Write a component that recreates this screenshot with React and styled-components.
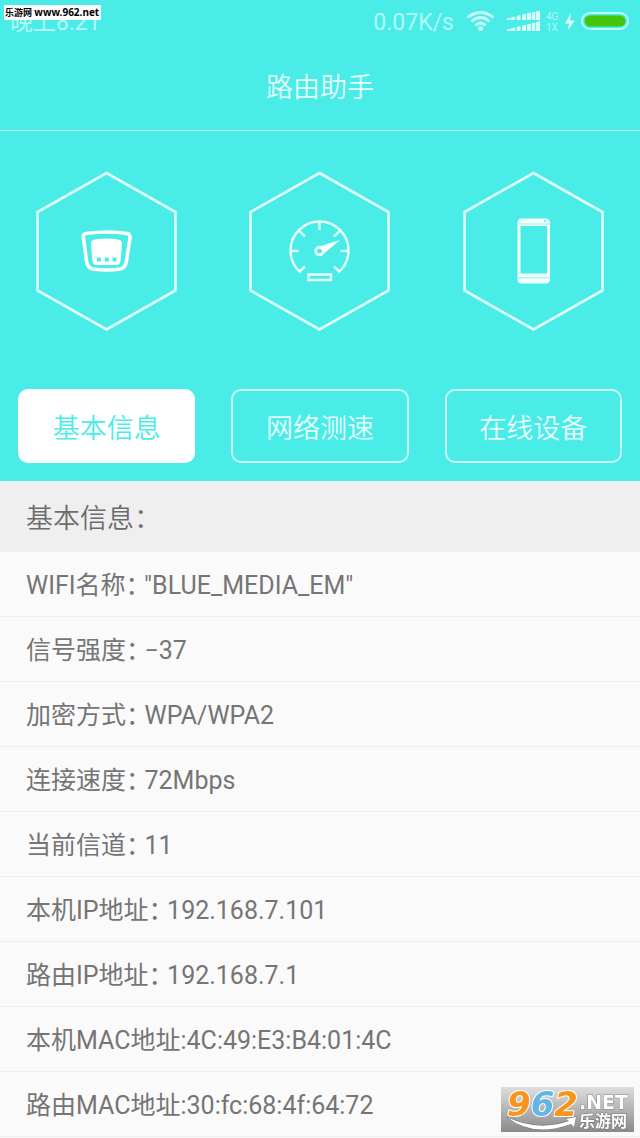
import React, { useState } from "react";
import styled, { createGlobalStyle } from "styled-components";

const GlobalStyle = createGlobalStyle`
  * {
    box-sizing: border-box;
  }
  body {
    margin: 0;
    background: #fafafa;
    font-family: Roboto, "Noto Sans CJK SC", sans-serif;
  }
`;

const tabs = [
  { id: "info", label: "基本信息", Icon: RouterIcon },
  { id: "speed", label: "网络测速", Icon: GaugeIcon },
  { id: "devices", label: "在线设备", Icon: PhoneIcon },
];

const rows = [
  { label: "WIFI名称\uff1a", value: '"BLUE_MEDIA_EM"' },
  { label: "信号强度\uff1a", value: "−37" },
  { label: "加密方式\uff1a", value: "WPA/WPA2" },
  { label: "连接速度\uff1a", value: "72Mbps" },
  { label: "当前信道\uff1a", value: "11" },
  { label: "本机IP地址\uff1a", value: "192.168.7.101" },
  { label: "路由IP地址\uff1a", value: "192.168.7.1" },
  { label: "本机MAC地址:", value: "4C:49:E3:B4:01:4C", tight: true },
  { label: "路由MAC地址:", value: "30:fc:68:4f:64:72", tight: true },
];

function RouterIcon() {
  return (
    <g>
      <path
        d="M50 62.5Q70.500 59.500 91 62.500Q94.500 63 94 67L90.500 90Q89.500 97 84 98Q70.500 100 57 98Q51.500 97 50.500 90L47.500 67Q46.500 63 50 62.500Z"
        fill="none"
        stroke="#fff"
        strokeWidth="3.600"
      />
      <path
        d="M59 68.500Q70.500 66.500 82 68.500Q86.500 69 86 74L84.500 90Q84 94 80.500 94H60.500Q57 94 56.500 90L55 74Q54.500 69 59 68.500Z"
        fill="#fff"
      />
      <path d="M61 86.500h4v4h-4zM68.800 86.500h4v4h-4zM76.500 86.500h4v4h-4z" fill="#4aece8" />
    </g>
  );
}

function GaugeIcon() {
  return (
    <g fill="none" stroke="#e6fffe" strokeWidth="2.400">
      <path d="M56 95.500L50.500 100.500A29 29 0 1 1 90.500 100.500L85 95.500" />
      <path d="M70.500 51v8M50.500 60l5.500 5.500M90.500 60l-5.500 5.500M41.500 80h8M99.500 80h-8" />
      <circle cx="70.500" cy="80" r="3.700" strokeWidth="3" />
      <path d="M70.500 75.500L91 69L75 82.500Z" fill="#fff" stroke="none" />
      <circle cx="70.500" cy="80" r="2.200" fill="#4aece8" stroke="none" />
      <path d="M59.500 103.500h22.500v5.500H59.500z" />
    </g>
  );
}

function PhoneIcon() {
  return (
    <g>
      <path
        fillRule="evenodd"
        fill="#f2ffff"
        d="M58 47.500H83Q87 48 87 52V108Q87 112 83 112.500H58Q54.500 112 54.500 108V52Q54.500 48 58 47.500ZM57.500 55V102.500H84V55Z"
      />
      <path d="M55 53H87M55 106.800H87" stroke="#8cf3f1" />
      <circle cx="82" cy="50" r="1" fill="#4aece8" />
    </g>
  );
}

function StatusIcons() {
  return (
    <StatusSvg viewBox="0 0 164 36" role="img" aria-label="WiFi, 信号, 充电中">
      <g fill="none" stroke="#c8fbfa" strokeWidth="2.800">
        <path d="M1.500 12.500Q14.500 2.500 27.500 12.500" />
        <path d="M5.500 16.500Q14.500 8.500 23.500 16.500" />
        <path d="M9.500 20.500Q14.500 15.500 19.500 20.500" />
      </g>
      <circle cx="14.500" cy="23.500" r="2.500" fill="#c8fbfa" />
      <g fill="#d5fcfb">
        <path d="M41 13.500l8-2V15h-8zM50.500 11l4-1v5h-4zM56 9.800l4-1V15h-4zM61 8.600l4-1V15h-4zM65.800 7.500l3.500-.8V15h-3.500zM70 6.500l4-1V15h-4z" />
        <path d="M41 24.500l8-2V26h-8zM50.500 22l4-1v5h-4zM56 20.800l4-1V26h-4zM61 19.500l4-1V26h-4zM65.800 18.300l3.500-.8V26h-3.500zM70 17l4-1v10h-4z" />
        <path d="M105 8L99 18.500h4.200l-1.700 7L109 15.500h-4.800z" />
      </g>
      <g fill="#b0f8f6" fontFamily="Roboto, sans-serif" fontSize="10">
        <text x="80" y="15">4G</text>
        <text x="80" y="26">1X</text>
      </g>
      <rect x="116" y="8" width="46" height="16" rx="8" fill="#4aece8" stroke="#b9fbf7" strokeWidth="2" />
      <rect x="118.500" y="10.500" width="41" height="11" rx="5.500" fill="#45c408" />
    </StatusSvg>
  );
}

function App() {
  const [active, setActive] = useState("info");

  return (
    <>
      <GlobalStyle />
      <Header>
        <StatusBar>
          <span>晚上8:21</span>
          <StatusRight>
            <span>0.07K/s</span>
            <StatusIcons />
          </StatusRight>
        </StatusBar>
        <Title>路由助手</Title>
        <Tabs>
          {tabs.map(({ id, label, Icon }) => (
            <Tab key={id}>
              <Hexagon viewBox="0 0 141 160" aria-hidden="true">
                <path
                  d="M70.500 2L139.500 41V119.500L70.500 158.500L1.500 119.500V41Z"
                  fill="none"
                  stroke="#dffefd"
                  strokeWidth="2.600"
                />
                <Icon />
              </Hexagon>
              <TabButton
                type="button"
                $active={active === id}
                aria-pressed={active === id}
                onClick={() => setActive(id)}
              >
                {label}
              </TabButton>
            </Tab>
          ))}
        </Tabs>
      </Header>
      <main>
        <SectionTitle>基本信息{"\uff1a"}</SectionTitle>
        <List>
          {rows.map((row) => (
            <Row key={row.label} $tight={row.tight}>
              <dt>{row.label}</dt>
              <dd>{row.value}</dd>
            </Row>
          ))}
        </List>
      </main>
      <SiteTag>
        乐游网 <span>www.962.net</span>
      </SiteTag>
      <SiteLogo viewBox="0 0 133 45" role="img" aria-label="962.NET 乐游网">
        <defs>
          <linearGradient id="logoBg" x1="0" y1="0" x2="0" y2="1">
            <stop offset="0" stopColor="#dedede" />
            <stop offset="1" stopColor="#8a8a8a" />
          </linearGradient>
        </defs>
        <rect width="133" height="45" fill="url(#logoBg)" />
        <g fontFamily="DejaVu Sans, sans-serif" fontWeight="700" paintOrder="stroke" strokeLinejoin="round">
          <text x="6" y="29" fontSize="34" fontStyle="italic" fill="#f7941d" stroke="#fff" strokeWidth="2">
            9<tspan fill="#62b5e5">6</tspan>2
          </text>
          <text x="78" y="22" fontSize="19" fill="#fff" stroke="#888" strokeWidth="1">
            .NET
          </text>
        </g>
        <g fill="#fff" stroke="#777" strokeWidth="1" paintOrder="stroke">
          <text x="78" y="40" fontSize="16" fontWeight="700" fontFamily="Noto Sans CJK SC, sans-serif">
            乐游网
          </text>
          <path d="M6 30Q36 45 68 34L65 32L75 30L73 40L70 37Q32 51 6 30Z" />
        </g>
      </SiteLogo>
    </>
  );
}

const Header = styled.header`
  background: #4aece8;
  color: #e4fefd;
`;

const StatusBar = styled.div`
  display: flex;
  justify-content: space-between;
  align-items: center;
  height: 46px;
  padding: 0 10px;
  font-size: 23px;
  line-height: 46px;
  color: #b5f9f7;
`;

const StatusRight = styled.div`
  display: flex;
  align-items: center;
  gap: 12px;
`;

const StatusSvg = styled.svg`
  width: 164px;
  height: 36px;
`;

const Title = styled.h1`
  margin: 0;
  border-bottom: 1px solid #c4faf8;
  font-size: 27px;
  font-weight: 350;
  line-height: 84px;
  text-align: center;
`;

const Tabs = styled.div`
  display: grid;
  grid-template-columns: repeat(3, 1fr);
  padding: 40px 0 18px;
`;

const Tab = styled.div`
  display: flex;
  flex-direction: column;
  align-items: center;
  gap: 58px;
  padding: 0 18px;
`;

const Hexagon = styled.svg`
  width: 141px;
  height: 160px;
`;

const TabButton = styled.button`
  width: 100%;
  height: 74px;
  padding: 0;
  border: 2px solid ${(props) => (props.$active ? "#fff" : "#c8fbf9")};
  border-radius: 10px;
  background: ${(props) => (props.$active ? "#fff" : "transparent")};
  color: ${(props) => (props.$active ? "#4aece8" : "#e4fefd")};
  font-family: inherit;
  font-size: 27px;
  font-weight: 350;
  cursor: pointer;
`;

const SectionTitle = styled.h2`
  margin: 0;
  padding: 5px 26px 0;
  background: #efefef;
  color: #6c6c6c;
  font-size: 27px;
  font-weight: 350;
  line-height: 66px;
`;

const List = styled.dl`
  margin: 0;
`;

const Row = styled.div`
  display: flex;
  gap: ${(props) => (props.$tight ? "0" : "6px")};
  padding: 4px 26px 0;
  border-bottom: 1px solid #eeeeee;
  color: #757575;
  font-size: 25px;
  line-height: 60px;

  dt {
    font-feature-settings: "halt";
  }

  dd {
    margin: 0;
  }
`;

const SiteTag = styled.div`
  position: absolute;
  top: 5px;
  left: 4px;
  padding: 0 2px 0 1px;
  background: #fff;
  color: #000;
  font-family: "Noto Sans", "Noto Sans CJK SC", sans-serif;
  font-size: 9px;
  font-weight: 700;
  line-height: 14px;
  white-space: nowrap;

  span {
    font-size: 10px;
  }
`;

const SiteLogo = styled.svg`
  position: fixed;
  right: 6px;
  bottom: 6px;
  width: 133px;
  height: 45px;
  overflow: visible;
`;

export default App;
